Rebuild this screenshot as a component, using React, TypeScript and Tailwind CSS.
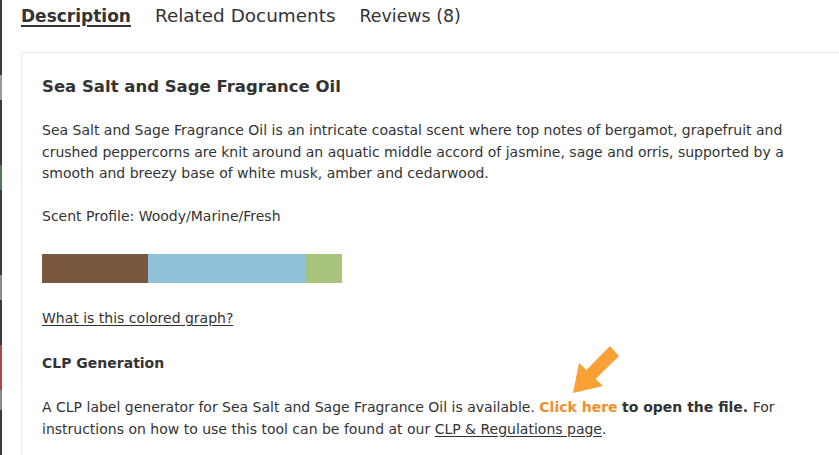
import React from 'react'

const strip = [
  { h: 'h-[75px]', c: 'bg-[#3a3a3a]' },
  { h: 'h-[25px]', c: 'bg-[#9a9a9a]' },
  { h: 'h-[65px]', c: 'bg-[#3a3a3a]' },
  { h: 'h-[25px]', c: 'bg-[#4d7a55]' },
  { h: 'h-[85px]', c: 'bg-[#3a3a3a]' },
  { h: 'h-[25px]', c: 'bg-[#8a8a8a]' },
  { h: 'h-[45px]', c: 'bg-[#3a3a3a]' },
  { h: 'h-[45px]', c: 'bg-[#a84a4a]' },
  { h: 'h-[20px]', c: 'bg-[#8a8a8a]' },
  { h: 'h-[45px]', c: 'bg-[#3a3a3a]' },
]

export default function App() {
  return (
    <div
      className="relative flex h-[455px] w-[839px] overflow-hidden bg-white text-[#333]"
      style={{ fontFamily: '"DejaVu Sans", "Open Sans", sans-serif' }}
    >
      <div className="flex w-[2px] shrink-0 flex-col">
        {strip.map((s, i) => (
          <div key={i} className={`${s.h} ${s.c}`} />
        ))}
      </div>

      <div className="flex flex-1 flex-col pl-[19px] pt-[4px]">
        <nav className="flex items-center gap-[24px] text-[18.4px] leading-[24px]">
          <span className="text-[17px] font-bold underline underline-offset-[3px] decoration-[2px]">Description</span>
          <span>Related Documents</span>
          <span className="text-[17.4px]">Reviews (8)</span>
        </nav>

        <div className="mt-[24px] flex-1 border-l border-t border-[#ececec] pl-[20px] pt-[22px] text-[14px] leading-[21.5px]">
          <h2 className="text-[16.5px] font-bold leading-[24px]">Sea Salt and Sage Fragrance Oil</h2>

          <p className="mt-[21px]">
            Sea Salt and Sage Fragrance Oil is an intricate coastal scent where top notes of bergamot, grapefruit and
            <br />
            crushed peppercorns are knit around an aquatic middle accord of jasmine, sage and orris, supported by a
            <br />
            smooth and breezy base of white musk, amber and cedarwood.
          </p>

          <p className="mt-[21px]">Scent Profile: Woody/Marine/Fresh</p>

          <div className="mt-[27px] flex h-[29px] w-[300px]">
            <div className="w-[106px] bg-[#7a5840]" />
            <div className="w-[157px] bg-[#8fc1da]" />
            <div className="w-[37px] bg-[#a7c47a]" />
          </div>

          <p className="mt-[25px]">
            <a className="underline underline-offset-2">What is this colored graph?</a>
          </p>

          <h3 className="mt-[23px] font-bold">CLP Generation</h3>

          <p className="mt-[23px]">
            A CLP label generator for Sea Salt and Sage Fragrance Oil is available.{' '}
            <a className="font-bold text-[#ef8f2b]">Click here</a> <strong>to open the file.</strong> For
            <br />
            instructions on how to use this tool can be found at our{' '}
            <a className="underline underline-offset-2">CLP &amp; Regulations page</a>.
          </p>
        </div>
      </div>

      <svg className="absolute left-[565px] top-[340px] h-[60px] w-[60px]" viewBox="0 0 60 60">
        <polygon points="8,53 14,23 21.4,29.9 45,6 54,16 30.6,39.1 38,46" fill="#f9a134" />
      </svg>
    </div>
  )
}
